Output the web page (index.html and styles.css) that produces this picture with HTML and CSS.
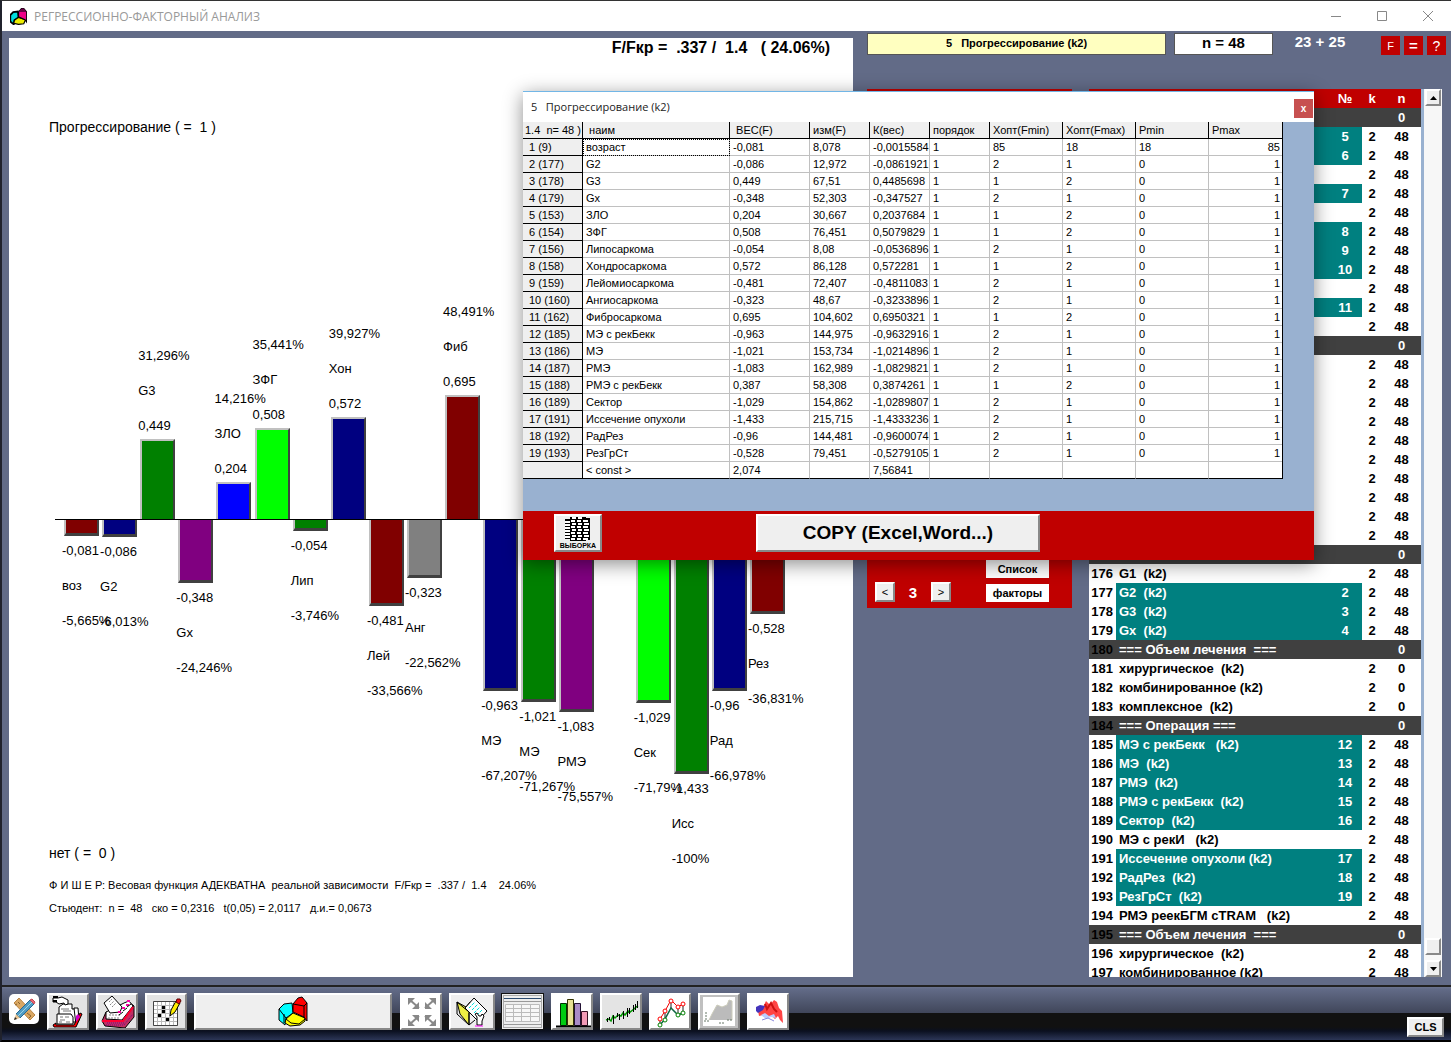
FILE: index.html
```html
<!DOCTYPE html>
<html lang="ru">
<head>
<meta charset="utf-8">
<title>РЕГРЕССИОННО-ФАКТОРНЫЙ АНАЛИЗ</title>
<link rel="stylesheet" href="styles.css">
</head>
<body>
<div class="app">
<header class="titlebar">
  <svg class="app-icon" width="17" height="17" viewBox="0 0 28 29"><path d="M0 12L5 7l8-1 1 10-7 5-1 7-6-5z" fill="#0dd" stroke="#000" stroke-width="3"/><path d="M7 21l7-5 12 4-3 7-9 1-8-2z" fill="#ee0" stroke="#000" stroke-width="2"/><path d="M14 7l5-6h4l5 6v17l-3-4-11-5z" fill="#e08" stroke="#000" stroke-width="2"/><path d="M14 7l5-6h4l5 6z" fill="#604"/></svg>
  <h1>РЕГРЕССИОННО-ФАКТОРНЫЙ АНАЛИЗ</h1>
  <div class="window-controls">
    <button aria-label="Свернуть"><svg width="12" height="12"><path d="M1 6.500h10"/></svg></button>
    <button aria-label="Развернуть"><svg width="12" height="12"><path d="M1.500 1.500h9v9h-9z"/></svg></button>
    <button aria-label="Закрыть"><svg width="12" height="12"><path d="M1 1l10 10M11 1L1 11"/></svg></button>
  </div>
</header>

<main class="work">
  <section class="chart">
    <p class="fisher">F/Fкр =  .337 /  1.4   ( 24.06%)</p>
    <h2>Прогрессирование ( =  1 )</h2>
    <div class="plot">
      <div class="bar down"><i class="maroon" style="height:16px"></i><span>-0,081</span><span>воз</span><span>-5,665%</span></div>
      <div class="bar down"><i class="navy" style="height:17px"></i><span>-0,086</span><span>G2</span><span>-6,013%</span></div>
      <div class="bar up"><span>31,296%</span><span>G3</span><span>0,449</span><i class="green" style="height:80px"></i></div>
      <div class="bar down"><i class="purple" style="height:63px"></i><span>-0,348</span><span>Gx</span><span>-24,246%</span></div>
      <div class="bar up"><span>14,216%</span><span>ЗЛО</span><span>0,204</span><i class="blue" style="height:37px"></i></div>
      <div class="bar up"><span>35,441%</span><span>ЗФГ</span><span>0,508</span><i class="lime" style="height:91px"></i></div>
      <div class="bar down"><i class="green" style="height:11px"></i><span>-0,054</span><span>Лип</span><span>-3,746%</span></div>
      <div class="bar up"><span>39,927%</span><span>Хон</span><span>0,572</span><i class="navy" style="height:102px"></i></div>
      <div class="bar down"><i class="maroon" style="height:86px"></i><span>-0,481</span><span>Лей</span><span>-33,566%</span></div>
      <div class="bar down"><i class="gray" style="height:58px"></i><span>-0,323</span><span>Анг</span><span>-22,562%</span></div>
      <div class="bar up"><span>48,491%</span><span>Фиб</span><span>0,695</span><i class="maroon" style="height:124px"></i></div>
      <div class="bar down"><i class="navy" style="height:171px"></i><span>-0,963</span><span>МЭ</span><span>-67,207%</span></div>
      <div class="bar down"><i class="green" style="height:182px"></i><span>-1,021</span><span>МЭ</span><span>-71,267%</span></div>
      <div class="bar down"><i class="purple" style="height:192px"></i><span>-1,083</span><span>РМЭ</span><span>-75,557%</span></div>
      <div class="bar up"></div>
      <div class="bar down"><i class="lime" style="height:183px"></i><span>-1,029</span><span>Сек</span><span>-71,79%</span></div>
      <div class="bar down"><i class="green" style="height:254px"></i><span>-1,433</span><span>Исс</span><span>-100%</span></div>
      <div class="bar down"><i class="navy" style="height:171px"></i><span>-0,96</span><span>Рад</span><span>-66,978%</span></div>
      <div class="bar down"><i class="maroon" style="height:94px"></i><span>-0,528</span><span>Рез</span><span>-36,831%</span></div>
    </div>
    <h2>нет ( =  0 )</h2>
    <div class="notes">
      <p>Ф И Ш Е Р: Весовая функция АДЕКВАТНА  реальной зависимости  F/Fкр =  .337 /  1.4    24.06%</p>
      <p>Стьюдент:  n =  48   ско = 0,2316   t(0,05) = 2,0117   д.и.= 0,0673</p>
    </div>
  </section>

  <section class="side">
    <div class="summary">
      <div class="target">5   Прогрессирование (k2)</div>
      <div class="count">n = 48</div>
      <div class="split">23 + 25</div>
      <div class="flags"><button>F</button><button class="eq">=</button><button class="q">?</button></div>
    </div>
    <div class="columns">
      <div class="panel">
        <div class="stepper"><button class="raised">&lt;</button><output>3</output><button class="raised">&gt;</button></div>
        <div class="modes"><button>Список</button><button>факторы</button></div>
      </div>
      <div class="list">
        <div class="rows">
        <table>
          <thead><tr><th></th><th></th><th>№</th><th>k</th><th>n</th></tr></thead>
          <tbody>
          <tr class="group"><td><td><td><td><td>0
          <tr class="sel"><td><td><td>5<td>2<td>48
          <tr class="sel"><td><td><td>6<td>2<td>48
          <tr><td><td><td><td>2<td>48
          <tr class="sel"><td><td><td>7<td>2<td>48
          <tr><td><td><td><td>2<td>48
          <tr class="sel"><td><td><td>8<td>2<td>48
          <tr class="sel"><td><td><td>9<td>2<td>48
          <tr class="sel"><td><td><td>10<td>2<td>48
          <tr><td><td><td><td>2<td>48
          <tr class="sel"><td><td><td>11<td>2<td>48
          <tr><td><td><td><td>2<td>48
          <tr class="group"><td><td><td><td><td>0
          <tr><td><td><td><td>2<td>48
          <tr><td><td><td><td>2<td>48
          <tr><td><td><td><td>2<td>48
          <tr><td><td><td><td>2<td>48
          <tr><td><td><td><td>2<td>48
          <tr><td><td><td><td>2<td>48
          <tr><td><td><td><td>2<td>48
          <tr><td><td><td><td>2<td>48
          <tr><td><td><td><td>2<td>48
          <tr><td><td><td><td>2<td>48
          <tr class="group"><td><td><td><td><td>0
          <tr><td>176<td>G1  (k2)<td><td>2<td>48
          <tr class="sel"><td>177<td>G2  (k2)<td>2<td>2<td>48
          <tr class="sel"><td>178<td>G3  (k2)<td>3<td>2<td>48
          <tr class="sel"><td>179<td>Gx  (k2)<td>4<td>2<td>48
          <tr class="group"><td>180<td>=== Объем лечения  ===<td><td><td>0
          <tr><td>181<td>хирургическое  (k2)<td><td>2<td>0
          <tr><td>182<td>комбинированное (k2)<td><td>2<td>0
          <tr><td>183<td>комплексное  (k2)<td><td>2<td>0
          <tr class="group"><td>184<td>=== Операция ===<td><td><td>0
          <tr class="sel"><td>185<td>МЭ с рекБекк   (k2)<td>12<td>2<td>48
          <tr class="sel"><td>186<td>МЭ  (k2)<td>13<td>2<td>48
          <tr class="sel"><td>187<td>РМЭ  (k2)<td>14<td>2<td>48
          <tr class="sel"><td>188<td>РМЭ с рекБекк  (k2)<td>15<td>2<td>48
          <tr class="sel"><td>189<td>Сектор  (k2)<td>16<td>2<td>48
          <tr><td>190<td>МЭ с рекИ   (k2)<td><td>2<td>48
          <tr class="sel"><td>191<td>Иссечение опухоли (k2)<td>17<td>2<td>48
          <tr class="sel"><td>192<td>РадРез  (k2)<td>18<td>2<td>48
          <tr class="sel"><td>193<td>РезГрСт  (k2)<td>19<td>2<td>48
          <tr><td>194<td>РМЭ реекБГМ сTRAM   (k2)<td><td>2<td>48
          <tr class="group"><td>195<td>=== Объем лечения  ===<td><td><td>0
          <tr><td>196<td>хирургическое  (k2)<td><td>2<td>48
          <tr><td>197<td>комбинированное (k2)<td><td>2<td>48
          </tbody>
        </table>
        </div>
        <div class="scroll">
          <button class="raised" aria-label="Вверх"><svg width="7" height="4"><path d="M0 4h7L3.500 0z"/></svg></button>
          <div class="track"><div class="thumb raised"></div></div>
          <button class="raised" aria-label="Вниз"><svg width="7" height="4"><path d="M0 0h7L3.500 4z"/></svg></button>
        </div>
      </div>
    </div>
  </section>
</main>

<footer class="toolbar">
  <button class="edit" aria-label="Правка"><svg width="30" height="30" viewBox="0 0 30 30"><path d="M5 9l5-5 16 17-5 5z" fill="#d9a763" stroke="#b98545"/><path d="M9 8l2 2M18 19l4 3M6 11l2-1M20 24l2-2" stroke="#8a622d"/><path d="M21 6l4 4-14 14-4-4z" fill="#4f9cc4" stroke="#256894"/><path d="M23 8L9 22" stroke="#9bd3e8"/><path d="M21 6l2-1 3 3-1 2z" fill="#e66a78" stroke="#c44452"/><path d="M7 20l4 4-6 2z" fill="#e8c391"/><path d="M5 26l1-3 2 2z" fill="#222"/></svg></button>
  <button class="raised tool" aria-label="Картотека"><svg width="39" height="35" viewBox="1 1 39 35"><path d="M11 13l4-3h9v5h4l2 13H11z" fill="#fff" stroke="#000"/><path d="M26 14h4l1 12-3 5z" fill="#fff" stroke="#000"/><path d="M5 31l3-2v2h18l6-12 2 1-6 13H6z" fill="#f00" stroke="#000"/><path d="M9 20h14l2 3v7H9z" fill="#fff" stroke="#000"/><path d="M30 20l2 3-4 5v-6z" fill="#c0c"/><path d="M5 4h5l4-1 6 3v4l-3 1-1-2-5 1-3-2H5z" fill="#fff" stroke="#000"/><path d="M5 3h5M5 7h4" stroke="#000" stroke-width="2"/><path d="M13 15h8M15 17h8M12 23h3M17 23h4M12 26h5M11 28h3M18 28h4" stroke="#777"/></svg></button>
  <button class="raised tool" aria-label="Каталог"><svg width="39" height="35" viewBox="1 1 39 35"><path d="M5 27l4-9 9 1L32 8l5 4v11l-9 11-20-2z" fill="#c03060" stroke="#000"/><path d="M9 18l18-9 5-2 4 5-11 14-16-1z" fill="#fff" stroke="#000"/><path d="M7 9l8-7 10 11-2 5-10 1z" fill="#fff" stroke="#000"/><path d="M12 8l3-3M13 11l4-4M15 13l4-4M12 21h11M11 24h11" stroke="#888" stroke-dasharray="2 1"/><path d="M21 18h3M25 14h3M29 11h3M30 7h3" stroke="#f0a" stroke-width="2"/><path d="M22 21l4-3M26 17l4-3M30 13l4-3" stroke="#000"/><path d="M5 27h21l10-14" fill="none" stroke="#f03" stroke-width="2"/><path d="M9 31h18l9-11M10 29h17" fill="none" stroke="#708" stroke-dasharray="1 1"/></svg></button>
  <button class="raised tool" aria-label="Сетка"><svg width="39" height="35" viewBox="1 1 39 35"><path d="M7 7h25v25H7z" fill="#fff"/><path d="M7.500 7.500h24v24h-24zM11.500 7v25M15.500 7v25M19.500 7v25M23.500 7v25M27.500 7v25M7 11.500h25M7 15.500h25M7 19.500h25M7 23.500h25M7 27.500h25" fill="none" stroke="#bbb"/><path d="M7.500 7.500h24v24h-24z" fill="none" stroke="#444"/><path d="M16 12h3v3h-3zM16 16h3v3h-3zM12 20h3v3h-3zM20 24h3v3h-3z"/><path d="M24 22l1-6 5-9 4 2-5 9z" fill="#fe0" stroke="#000"/><path d="M30 8l1-3h3l1 2-2 3z" fill="#e11" stroke="#500"/></svg></button>
  <button class="raised tool wide" aria-label="Анализ"><svg width="30" height="31" viewBox="-1 -1 30 31"><path d="M0 12L5 7l8-1 1 10-7 5-1 7-6-5z" fill="#0ff" stroke="#000"/><path d="M0 12l3 4 4 5M5 17v9" fill="none" stroke="#000"/><path d="M7 22l7-6 12 5v3l-5 4-10 1-5-3z" fill="#ff0" stroke="#000"/><path d="M7 22l5 4 8 1 6-5" fill="none" stroke="#000"/><path d="M14 7l5-6 4-1 5 6v18l-3-4-11-5z" fill="#f00" stroke="#000"/><path d="M14 7l11 2 3-3M25 9v11" fill="none" stroke="#000"/></svg></button>
  <button class="raised tool white" aria-label="Во весь экран"><svg width="39" height="35" viewBox="1 1 39 35"><path d="M9 6l9 8M33 6l-9 8M9 30l9-8M33 30l-9-8" stroke="#888" stroke-width="2"/><path d="M7 4h7l-7 7zM18 15h-7l7-7zM35 4h-7l7 7zM24 15h7l-7-7zM7 32h7l-7-7zM18 21h-7l7 7zM35 32h-7l7-7zM24 21h7l-7 7z" fill="#888"/></svg></button>
  <button class="raised tool mid" aria-label="Открыть"><svg width="39" height="35" viewBox="4 1 39 35"><path d="M8 8l3 12 9 11V19l8-8-7-3-4 5z" fill="#ee4" stroke="#000"/><path d="M8 8l12 10v13M8 8v12l12 11 6-5" fill="none" stroke="#000"/><path d="M16 14l9-10 13 13-9 10z" fill="#fff" stroke="#000"/><path d="M20 14l6-6M23 16l6-6M25 19l6-6M28 21l5-5" stroke="#0dd" stroke-dasharray="3 1"/><path d="M28 31v-8l-2-3 2-1 2 3h2l1-2 2 2-2 5v4z" fill="#fff" stroke="#000"/><path d="M26 32h8" stroke="#f0f"/></svg></button>
  <button class="tool pressed" aria-label="Таблица"><svg width="37" height="31"><path d="M0 2.500h37" stroke="#2c4b70"/><path d="M0 5.500h37M0 28.500h37" stroke="#999"/><path d="M1.500 8.500h34v17h-34zM1 12.500h35M1 16.500h35M1 20.500h35M9.500 8v18M17.500 8v18M26.500 8v18" fill="#f7f7f7" stroke="#bbb"/></svg></button>
  <button class="raised tool white" aria-label="Столбцы"><svg width="39" height="35" viewBox="1 1 39 35"><path d="M8.500 9.500h6v22h-6z" fill="#0c1" stroke="#030"/><path d="M15.500 5.500h6v26h-6z" fill="#e7e093" stroke="#330"/><path d="M22.500 9.500h6v22h-6z" fill="#a98bc7" stroke="#213"/><path d="M29.500 17.500h6v14h-6z" fill="#f29ab5" stroke="#312"/><path d="M4 32.500h36" stroke="#000" stroke-width="2"/></svg></button>
  <button class="raised tool" aria-label="Ряд"><svg width="39" height="35" viewBox="1 1 39 35"><path d="M5 26l3-1 2 2 2-5 2 2 3-3 3 1 2-3 2 2 3-4 2 1 4-3 2-2 2-1" fill="none" stroke="#090" stroke-width="1.500"/><path d="M6.500 24v4M8.500 23v3M12.500 21v9M16.500 19v4M18.500 20v6M22.500 17v8M26.500 14v9M28.500 14v6M32.500 11v7M34.500 10v6M36.500 7v7" fill="none" stroke="#000"/></svg></button>
  <button class="raised tool white" aria-label="Графики"><svg width="39" height="35" viewBox="1 1 39 35"><path d="M10 25l5-8 6-11 7 7 5-3" fill="none" stroke="#e00"/><path d="M10 25v5M15 17v8M21 7v8M28 13v7M33 10v9" fill="none" stroke="#222"/><path d="M10 31l5-6 6-11 7 7 5-2" fill="none" stroke="#164" stroke-width="1.500"/><g fill="#fff" stroke="red"><circle cx="10" cy="25" r="2"/><circle cx="15" cy="17" r="2"/><circle cx="21" cy="7" r="2"/><circle cx="28" cy="13" r="2"/><circle cx="33" cy="10" r="2"/></g><g fill="#fff" stroke="green"><circle cx="10" cy="31" r="2"/><circle cx="15" cy="26" r="2"/><circle cx="28" cy="21" r="2"/><circle cx="33" cy="19" r="2"/></g></svg></button>
  <button class="raised tool silver" aria-label="Плотность"><svg width="32" height="29"><path d="M0 0h32v29H0z" fill="#fff"/><path d="M6 23l3-6 5-9 5 2 5-2 2-5 3 1v19z" fill="#bbb"/><path d="M6 23l3-6 5-9 5 2 5-2 2-5 3 1v19" fill="none" stroke="#ccb"/><path d="M3 15v8M1 24h6M16 26h6M24 23h5" stroke="#676" stroke-dasharray="2 1"/></svg></button>
  <button class="raised tool white" aria-label="Поверхность"><svg width="39" height="35" viewBox="1 1 39 35"><path d="M10 17l5-4 3-6 4 4 4-5 3 2 2 6 3 3 1 12-3-3-2-4-3 3-3-3-5 1-4-2-4 1z" fill="#f44"/><path d="M8 13l4-2 5 1-2 4-5 3-2-2z" fill="#43b"/><path d="M13 21l4-2 4 3 5-2 2 4-5-1-5 2z" fill="#bcf"/><path d="M17 10l2 5 4-6 3 6 3 3" fill="none" stroke="#c11" stroke-width="2"/><path d="M14 26l6-2 6 3" fill="none" stroke="#88d"/></svg></button>
  <button class="raised cls">CLS</button>
</footer>
</div>

<section class="dialog" role="dialog" aria-label="Прогрессирование (k2)">
  <header><h3>5   Прогрессирование (k2)</h3><button aria-label="Закрыть">x</button></header>
  <div class="sheet">
  <table>
    <colgroup><col class="c-id"><col class="c-name"><col class="c-w"><col class="c-s"><col class="c-s"><col class="c-s"><col class="c-m"><col class="c-m"><col class="c-m"><col class="c-m"></colgroup>
    <thead><tr><th>1.4  n= 48 )</th><th> наим</th><th> ВЕС(F)</th><th>изм(F)</th><th>К(вес)</th><th>порядок</th><th>Хопт(Fmin)</th><th>Хопт(Fmax)</th><th>Pmin</th><th>Pmax</th></tr></thead>
    <tbody>
    <tr><th>1 (9)<td class="focus">возраст<td>-0,081<td>8,078<td>-0,0015584<td>1<td>85<td>18<td>18<td>85
    <tr><th>2 (177)<td>G2<td>-0,086<td>12,972<td>-0,0861921<td>1<td>2<td>1<td>0<td>1
    <tr><th>3 (178)<td>G3<td>0,449<td>67,51<td>0,4485698<td>1<td>1<td>2<td>0<td>1
    <tr><th>4 (179)<td>Gx<td>-0,348<td>52,303<td>-0,347527<td>1<td>2<td>1<td>0<td>1
    <tr><th>5 (153)<td>ЗЛО<td>0,204<td>30,667<td>0,2037684<td>1<td>1<td>2<td>0<td>1
    <tr><th>6 (154)<td>ЗФГ<td>0,508<td>76,451<td>0,5079829<td>1<td>1<td>2<td>0<td>1
    <tr><th>7 (156)<td>Липосаркома<td>-0,054<td>8,08<td>-0,0536896<td>1<td>2<td>1<td>0<td>1
    <tr><th>8 (158)<td>Хондросаркома<td>0,572<td>86,128<td>0,572281<td>1<td>1<td>2<td>0<td>1
    <tr><th>9 (159)<td>Лейомиосаркома<td>-0,481<td>72,407<td>-0,4811083<td>1<td>2<td>1<td>0<td>1
    <tr><th>10 (160)<td>Ангиосаркома<td>-0,323<td>48,67<td>-0,3233896<td>1<td>2<td>1<td>0<td>1
    <tr><th>11 (162)<td>Фибросаркома<td>0,695<td>104,602<td>0,6950321<td>1<td>1<td>2<td>0<td>1
    <tr><th>12 (185)<td>МЭ с рекБекк<td>-0,963<td>144,975<td>-0,9632916<td>1<td>2<td>1<td>0<td>1
    <tr><th>13 (186)<td>МЭ<td>-1,021<td>153,734<td>-1,0214896<td>1<td>2<td>1<td>0<td>1
    <tr><th>14 (187)<td>РМЭ<td>-1,083<td>162,989<td>-1,0829821<td>1<td>2<td>1<td>0<td>1
    <tr><th>15 (188)<td>РМЭ с рекБекк<td>0,387<td>58,308<td>0,3874261<td>1<td>1<td>2<td>0<td>1
    <tr><th>16 (189)<td>Сектор<td>-1,029<td>154,862<td>-1,0289807<td>1<td>2<td>1<td>0<td>1
    <tr><th>17 (191)<td>Иссечение опухоли<td>-1,433<td>215,715<td>-1,4333236<td>1<td>2<td>1<td>0<td>1
    <tr><th>18 (192)<td>РадРез<td>-0,96<td>144,481<td>-0,9600074<td>1<td>2<td>1<td>0<td>1
    <tr><th>19 (193)<td>РезГрСт<td>-0,528<td>79,451<td>-0,5279105<td>1<td>2<td>1<td>0<td>1
    <tr><th><td>&lt; const &gt;<td>2,074<td><td>7,56841<td><td><td><td><td>
    </tbody>
  </table>
  </div>
  <footer>
    <button class="raised sample"><svg width="26" height="25" shape-rendering="crispEdges"><path d="M5 0h16v1h4v22h-4v1H5v-2H0V2h5z" fill="#000"/><path d="M7 1h4M13 1h4M6 4h4M12 4h4M18 4h5M7 7h4M13 7h4M19 7h5M6 10h4M12 10h4M18 10h5M7 13h4M13 13h4M19 13h5M6 16h4M12 16h4M18 16h5M7 19h4M13 19h4M19 19h5M6 22h4M12 22h4M18 22h5M0 5h5M0 8h5M0 11h5M0 14h5M0 17h5M0 20h5" stroke="#fff" stroke-width="2"/></svg><span>ВЫБОРКА</span></button>
    <button class="raised copy">COPY (Excel,Word...)</button>
  </footer>
</section>
</body>
</html>
```
FILE: styles.css
```css
* { box-sizing: border-box; }
body, h1, h2, h3, p { margin: 0; font-weight: normal; }
body {
  font-family: "Liberation Sans", Arial, sans-serif;
  font-size: 13px;
  color: #000;
  background: #626b87;
}
button { margin: 0; padding: 0; border: 0; font: inherit; color: inherit; background: none; }
table { border-collapse: collapse; table-layout: fixed; }
th, td { padding: 0; white-space: pre; overflow: hidden; }
td:last-child { white-space: nowrap; }

.app {
  display: flex;
  flex-direction: column;
  height: 100vh;
  min-width: 1100px;
  border-left: 2px solid #20222c;
  border-top: 1px solid #333;
  border-bottom: 2px solid #000;
}

.titlebar { display: flex; align-items: center; height: 30px; padding-left: 8px; background: #fff; }
.titlebar h1 {
  flex: 1;
  margin-left: 7px;
  font: 12px "Open Sans", "Noto Sans", sans-serif;
  color: #999;
}
.window-controls { display: flex; }
.window-controls button { display: grid; place-items: center; width: 46px; height: 28px; }
.window-controls path { fill: none; stroke: #888; }

.work { flex: 1; display: flex; gap: 14px; min-height: 0; padding: 7px 5px 8px 7px; }

.chart { flex: 1; min-width: 0; background: #fff; overflow: hidden; }
.chart p, .chart h2, .chart span { white-space: pre; }
.fisher { padding-right: 23px; line-height: 20px; font-size: 16px; font-weight: bold; text-align: right; }
.chart h2 { padding-left: 40px; font-size: 14px; line-height: 22px; }
.fisher + h2 { margin-top: 58px; }
.notes { padding: 10px 0 0 40px; font-size: 11px; line-height: 23px; }
/* The axis lies 381px below the top of the plot. */
.plot {
  display: flex;
  justify-content: space-between;
  align-items: flex-start;
  height: 704px;
  margin: 0 68px 0 46px;
  padding-left: 9px;
  background: linear-gradient(#000, #000) 0 381px / 100% 1px no-repeat;
  font-size: 13px;
  line-height: 35px;
}
.bar { display: flex; flex-direction: column; width: 35px; }
.bar span { margin-left: -2px; width: 0; }
.bar i { display: block; border-left: 2px solid #c0c0c0; border-right: 2px solid #404040; }
.up { height: 381px; justify-content: flex-end; }
.down { margin-top: 382px; }
.up span:nth-of-type(3) { margin-bottom: -4px; }
.down span:nth-of-type(1) { margin-top: -3px; }
.up i { border-top: 2px solid #c0c0c0; }
.down i { border-bottom: 3px solid #404040; }
.maroon { background: #800000; }
.navy { background: #000080; }
.green { background: #008000; }
.purple { background: #800080; }
.blue { background: #00f; }
.lime { background: #0f0; }
.gray { background: #808080; }

.side { display: flex; flex-direction: column; width: 579px; }
.summary { display: flex; align-items: flex-start; height: 51px; margin-top: -5px; font-weight: bold; white-space: pre; }
.target, .count { border: 1px solid #555; text-align: center; line-height: 18px; height: 22px; }
.target { flex: 1; background: #ffffc0; font-size: 11px; }
.count { width: 99px; margin-left: 8px; background: #fff; font-size: 15px; }
.split { width: 94px; text-align: center; color: #fff; font-size: 15px; line-height: 18px; }
.flags { display: flex; gap: 4px; margin: 3px 0 0 14px; color: #fff; font-weight: normal; }
.flags button { width: 19px; height: 19px; background: #c00000; font-size: 11px; line-height: 16px; }
.flags .eq { font-size: 15px; font-weight: bold; }
.flags .q { font-size: 14px; }

.columns { flex: 1; display: flex; justify-content: space-between; min-height: 0; margin-top: 5px; padding-right: 4px; }
.panel {
  display: flex;
  justify-content: space-between;
  align-items: flex-end;
  align-self: flex-start;
  width: 205px;
  height: 519px;
  padding: 0 23px 6px 8px;
  background: #c00000;
}
.stepper { display: flex; align-items: center; font-size: 11px; }
.stepper button { width: 20px; height: 20px; }
.stepper output { width: 36px; text-align: center; color: #fff; font-size: 15px; font-weight: bold; }
.modes { display: grid; gap: 6px; width: 63px; }
.modes button { height: 18px; background: #fff; font-size: 11px; font-weight: bold; }
.raised {
  background: #efefef;
  border: 2px solid;
  border-color: #fff #888 #888 #fff;
}

.list { display: flex; width: 353px; background: #fff; overflow: hidden; }
.rows { flex: 1; border-right: 3px solid #99b1d0; overflow: hidden; }
.rows table { width: 100%; font-weight: bold; font-size: 13px; line-height: 19px; }
.rows tr { height: 19px; }
.rows th { background: #c00000; color: #fff; text-align: center; }
.rows th:nth-child(1) { width: 27px; }
.rows th:nth-child(3) { width: 34px; }
.rows th:nth-child(4) { width: 20px; }
.rows th:nth-child(5) { width: 39px; }
.rows td { height: 19px; text-align: center; }
.rows td:nth-child(1) { text-align: right; padding-right: 3px; }
.rows td:nth-child(2) { text-align: left; padding-left: 3px; }
.group { background: #404040; color: #fff; }
.group td:first-child { color: #000; }
.sel td:nth-child(2), .sel td:nth-child(3) { background: #008080; color: #fff; }
.scroll { display: flex; flex-direction: column; width: 18px; background: #f7f7f7; padding: 0 1px; }
.scroll button { display: grid; place-items: center; height: 17px; }
.track { flex: 1; display: flex; align-items: flex-end; padding-bottom: 5px; }
.thumb { flex: 1; height: 17px; }

.toolbar {
  display: flex;
  align-items: flex-start;
  height: 55px;
  padding: 6px 7px 0;
  border-top: 2px solid #222;
  background: linear-gradient(#6b7490 0, #626b87 2px, #40465a 26px, #111 26px, #111 40px, #0b1020 44px, #2c3657 53px);
}
.tool { display: grid; place-items: center; width: 42px; height: 37px; margin-right: 7px; overflow: hidden; background: #e4e4e4; }
.tool.wide { width: 198px; margin-right: 8px; background: #efefef; }
.tool.mid { width: 46px; margin-right: 6px; background: #efefef; }
.tool.white { background: #fff; }
.tool.silver { background: #c0c0c0; }
.tool.pressed { width: 43px; border: 1px solid #111; outline: 1px solid #aaa; outline-offset: -3px; background: #eee; }
.edit { width: 30px; height: 30px; margin: 1px 8px 0 0; border-radius: 5px; background: #fff; }
.cls { align-self: flex-end; width: 37px; height: 20px; margin: 0 0 3px auto; font-size: 11px; font-weight: bold; line-height: 16px; }

.dialog {
  position: absolute;
  left: 523px;
  top: 91px;
  width: 791px;
  border-top: 1px solid #72b6e6;
  background: #fff;
  box-shadow: 0 4px 18px rgba(0, 0, 0, .45);
}
.dialog header { display: flex; justify-content: space-between; height: 30px; padding-left: 8px; }
.dialog h3 { font: 11px/30px "Open Sans", "Noto Sans", sans-serif; white-space: pre; color: #222; }
.dialog header button { width: 19px; height: 19px; margin: 7px 1px 0 0; background: #c75050; color: #fff; font-size: 10px; font-weight: bold; line-height: 16px; }
.sheet { padding: 0 0 32px; background: #99b1d0; }
.sheet table { width: 759px; border-collapse: separate; border-spacing: 0; background: #fff; font-size: 11px; line-height: 16px; border-right: 1px solid #000; }
.sheet th, .sheet td {
  height: 17px;
  padding-left: 3px;
  border: solid #c0c0c0;
  border-width: 0 1px 1px 0;
  font-weight: normal;
  text-align: left;
}
.sheet th { background: #efefef; border-color: #000; }
.sheet tbody th { padding-left: 6px; }
.sheet thead th:first-child { padding-left: 2px; }
.sheet th:last-child, .sheet td:last-child { border-right: 0; }
.sheet td:last-child { text-align: right; padding-right: 2px; }
.sheet tr:last-child td { border-bottom-color: #000; }
.sheet .focus { outline: 1px dotted #000; outline-offset: -1px; }
.c-id { width: 60px; }
.c-name { width: 147px; }
.c-w { width: 80px; }
.c-s { width: 60px; }
.c-m { width: 73px; }
.dialog footer { display: flex; height: 49px; padding: 3px 0 0 31px; background: #c00000; }
.sample { display: flex; flex-direction: column; align-items: center; justify-content: center; width: 48px; height: 38px; }
.sample span { font-size: 7px; line-height: 8px; font-weight: bold; }
.copy { width: 284px; height: 38px; margin-left: 154px; font-size: 19px; font-weight: bold; }
```
